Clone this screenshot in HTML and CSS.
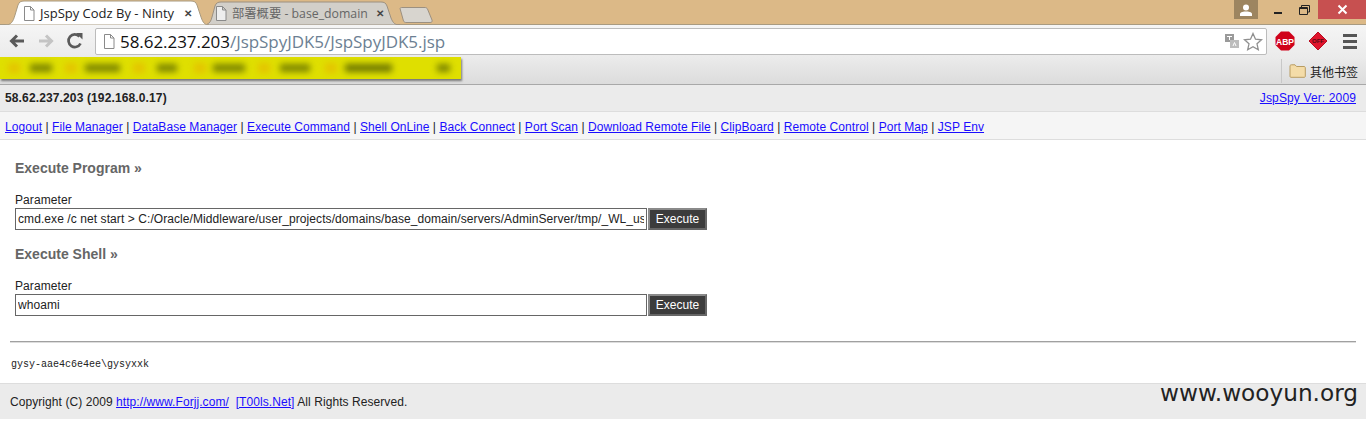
FILE: index.html
```html
<!DOCTYPE html>
<html>
<head>
<meta charset="utf-8">
<title>JspSpy Codz By - Ninty</title>
<link rel="stylesheet" href="styles.css">
</head>
<body>
<div class="titlebar">
  <div class="tabs">
    <div class="tab active">
      <svg class="tab-shape" width="204" height="25" viewBox="0 0 204 25"><path d="M0 25 C6 25 8 22 10 15 L13 5 C14 2 16 1 19 1 H186 C189 1 191 2 192 5 L196 17 C198 23 200 25 204 25 Z" fill="#fff" stroke="#a89a80" stroke-width="1"/></svg>
      <svg class="doc" width="12" height="15" viewBox="0 0 12 15"><path d="M1.5 .5H7.5L11 4V14.500H1.500Z M7.500 .5V4H11" fill="#fff" stroke="#8a8a8a"/></svg>
      <span class="tab-title">JspSpy Codz By - Ninty</span>
      <span class="tab-x">✕</span>
    </div>
    <div class="tab inactive">
      <svg class="tab-shape" width="194" height="24" viewBox="0 0 194 24"><path d="M0 24 C4 22 5 20 6 16 L9 5 C10 2 12 1 15 1 H175 C178 1 180 2 181 5 L185 17 C187 22 189 24 194 24 Z" fill="#d2cfc9" stroke="#9c9080"/></svg>
      <svg class="doc" width="12" height="15" viewBox="0 0 12 15"><path d="M1.5 .5H7.500L11 4V14.500H1.500Z M7.500 .5V4H11" fill="#eee" stroke="#8a8a8a"/></svg>
      <span class="tab-title dim">部署概要 - base_domain</span>
      <span class="tab-x">✕</span>
    </div>
    <svg class="newtab" width="34" height="16" viewBox="0 0 34 16"><path d="M1 1.500 C1 1 2 .5 3 .5 H26 C27 .5 28 1 28.500 2 L33 13 C33.500 14.500 33 15.500 31 15.500 H7 C6 15.500 5 15 4.500 14 Z" fill="#d8d5cf" stroke="#9c9080"/></svg>
  </div>
  <div class="winctl">
    <div class="user"><svg width="14" height="12" viewBox="0 0 14 12"><circle cx="7" cy="3.500" r="3" fill="#fff"/><path d="M1 12V10C1 8 5 7.500 7 7.500S13 8 13 10V12Z" fill="#fff"/></svg></div>
    <div class="ctl"><span class="min"></span></div>
    <div class="ctl"><svg width="11" height="10" viewBox="0 0 11 10"><path d="M2.500 2.500V.5H10.500V7H8.500" fill="none" stroke="#222"/><path d="M.5 2.500H8.500V9.500H.5Z" fill="none" stroke="#222" stroke-width="1"/><path d="M.5 3.500H8.500" stroke="#222"/></svg></div>
    <div class="close"><svg width="11" height="11" viewBox="0 0 11 11"><path d="M1.500 1.500L9.500 9.500M9.500 1.500L1.500 9.500" stroke="#fff" stroke-width="2"/></svg></div>
  </div>
</div>
<div class="toolbar">
  <svg class="tool" width="18" height="16" viewBox="0 0 18 16"><path d="M16 8H4M9 2.500L3.500 8L9 13.500" fill="none" stroke="#5a5a5a" stroke-width="3"/></svg>
  <svg class="tool" width="18" height="16" viewBox="0 0 18 16"><path d="M2 8H14M9 2.500L14.500 8L9 13.500" fill="none" stroke="#c4c4c4" stroke-width="3"/></svg>
  <svg class="tool reload" width="18" height="18" viewBox="0 0 18 18"><path d="M14.500 11.500A6.300 6.300 0 1 1 13.500 4.500" fill="none" stroke="#5a5a5a" stroke-width="2.700"/><path d="M10 1H16.500V7.500Z" fill="#5a5a5a"/></svg>
  <div class="omnibox">
    <svg class="doc" width="12" height="15" viewBox="0 0 12 15"><path d="M1.500 .5H7.500L11 4V14.500H1.500Z M7.500 .5V4H11" fill="#fff" stroke="#8a8a8a"/></svg>
    <span class="url"><b>58.62.237.203</b>/JspSpyJDK5/JspSpyJDK5.jsp</span>
    <svg class="translate" width="14" height="15" viewBox="0 0 14 15"><rect width="9" height="8" fill="#9a9a9a"/><rect x="5" y="6" width="9" height="8" fill="#bdbdbd"/><path d="M2 2.500H7M4.500 2.500V6" stroke="#fff"/><path d="M8 12L9.500 8.500L11 12" stroke="#fff" fill="none"/></svg>
    <svg class="star" width="20" height="19" viewBox="0 0 20 19"><path d="M10 1.500L12.500 7.200L18.500 7.800L14 11.800L15.300 17.700L10 14.700L4.700 17.700L6 11.800L1.500 7.800L7.500 7.200Z" fill="#fff" stroke="#8f8f8f" stroke-width="1.300"/></svg>
  </div>
  <svg class="ext abp" width="20" height="20" viewBox="0 0 20 20"><path d="M6 .5H14L19.500 6V14L14 19.500H6L.5 14V6Z" fill="#d0021b"/><text x="10" y="13.500" text-anchor="middle" class="abp-text">ABP</text></svg>
  <svg class="ext" width="20" height="20" viewBox="0 0 20 20"><path d="M10 1L19 10L10 19L1 10Z" fill="#e0142c" stroke="#b70e22"/><text x="10" y="12" text-anchor="middle" class="off-text">OFF</text></svg>
  <div class="menu"><i></i><i></i><i></i></div>
</div>
<div class="bookmarks">
  <div class="yellow">
    <div class="blur">
      <span class="b1"></span><span class="b2 w1"></span>
      <span class="b1 g1"></span><span class="b2 w2"></span>
      <span class="b1 g2"></span><span class="b2 w3"></span>
      <span class="b1 g3"></span><span class="b2 w4"></span>
      <span class="b1 g4"></span><span class="b2 w5"></span>
      <span class="b1 g5"></span><span class="b2 w6"></span>
      <span class="b2 w7"></span>
    </div>
  </div>
  <div class="other">
    <svg width="17" height="14" viewBox="0 0 17 14"><path d="M1 12.500V2C1 1 2 .8 2.500 .8H6L7.500 2.500H15C16 2.500 16.300 3 16.300 4V12.500C16.300 13 16 13.300 15 13.300H2C1.400 13.300 1 13 1 12.500Z" fill="#f4dca8" stroke="#b89c62"/></svg>
    <span>其他书签</span>
  </div>
</div>
<div class="page">
  <div class="info">
    <b>58.62.237.203 (192.168.0.17)</b>
    <a href="#">JspSpy Ver: 2009</a>
  </div>
  <div class="nav">
    <a href="#">Logout</a> | <a href="#">File Manager</a> | <a href="#">DataBase Manager</a> | <a href="#">Execute Command</a> | <a href="#">Shell OnLine</a> | <a href="#">Back Connect</a> | <a href="#">Port Scan</a> | <a href="#">Download Remote File</a> | <a href="#">ClipBoard</a> | <a href="#">Remote Control</a> | <a href="#">Port Map</a> | <a href="#">JSP Env</a>
  </div>
  <div class="content">
    <h2>Execute Program »</h2>
    <label>Parameter</label>
    <div class="field"><input type="text" value="cmd.exe /c net start &gt; C:/Oracle/Middleware/user_projects/domains/base_domain/servers/AdminServer/tmp/_WL_user/jspspy/result.txt"><button>Execute</button></div>
    <h2 class="second">Execute Shell »</h2>
    <label>Parameter</label>
    <div class="field"><input type="text" value="whoami"><button>Execute</button></div>
  </div>
  <div class="rule"></div>
  <pre class="output">gysy-aae4c6e4ee\gysyxxk</pre>
  <div class="footer">
    <span>Copyright (C) 2009 <a href="#">http://www.Forjj.com/</a>&nbsp; <a href="#">[T00ls.Net]</a> All Rights Reserved.</span>
    <span class="mark">www.wooyun.org</span>
  </div>
</div>
</body>
</html>
```
FILE: styles.css
```css
* { box-sizing: border-box; }
html, body { margin: 0; padding: 0; }
body { width: 1366px; height: 421px; overflow: hidden; background: #fff; font-family: "Liberation Sans", Arial, sans-serif; font-size: 12px; color: #222; }
a { color: #1a0dff; text-decoration: underline; }

.titlebar { height: 25px; background: #dcb987; display: flex; justify-content: space-between; border-bottom: 1px solid #a89a80; }
.tabs { display: flex; align-items: flex-end; height: 25px; padding-left: 5px; }
.tab { position: relative; height: 25px; display: flex; align-items: center; font-family: "Open Sans", "Noto Sans", "Noto Sans CJK SC", sans-serif; font-size: 13px; color: #222; }
.tab-shape { position: absolute; left: 0; top: 0; }
.tab > .doc, .tab > span { position: relative; }
.active { width: 204px; padding: 1px 0 0 18px; z-index: 2; }
.inactive { width: 190px; margin-left: -3px; height: 24px; padding: 0 0 0 9px; color: #666; }
.tab .doc { margin-right: 5px; flex: none; }
.tab-title { width: 142px; white-space: nowrap; }
.tab-title.dim { width: 137px; font-size: 12.3px; }
.tab-x { font-size: 10px; font-weight: 700; color: #444; margin-left: 2px; }
.inactive .tab-x { margin-left: 7px; }
.newtab { margin: 0 0 2px 3px; flex: none; }

.winctl { display: flex; height: 19px; }
.user { width: 24px; background: #9d8560; margin-right: 7px; display: flex; align-items: center; justify-content: center; }
.ctl { width: 26px; display: flex; align-items: center; justify-content: center; }
.min { width: 8px; height: 2px; background: #222; margin-top: 6px; }
.close { width: 48px; margin-left: 1px; background: #c75050; display: flex; align-items: center; justify-content: center; }

.toolbar { height: 32px; background: linear-gradient(#f5f5f5, #ebebeb); display: flex; align-items: center; padding: 0 0 0 8px; }
.tool { flex: none; margin-right: 11px; }
.reload { margin-right: 12px; }
.omnibox { width: 1172px; height: 27px; background: #fff; border: 1px solid #bcbcbc; border-radius: 2px; display: flex; align-items: center; padding: 0 3px 0 7px; margin-left: -1px; }
.omnibox .doc { flex: none; margin-right: 5px; }
.url { font-family: "Open Sans", "Noto Sans", sans-serif; font-size: 17px; color: #6c7f93; flex: 1; white-space: nowrap; letter-spacing: -.05px; }
.url b { font-weight: 400; color: #111; }
.translate { margin-right: 4px; }
.ext { flex: none; margin-left: 13px; }
.abp { margin-left: 8px; }
.abp-text { font: 700 8.5px "Liberation Sans", sans-serif; fill: #fff; }
.off-text { font: 700 6px "Liberation Sans", sans-serif; fill: #5a0a12; }
.menu { display: flex; flex-direction: column; gap: 3px; width: 14px; margin-left: 15px; }
.menu i { display: block; height: 3px; background: #555; }

.bookmarks { height: 28px; background: linear-gradient(#ebebeb, #dcdcdc); display: flex; justify-content: space-between; border-bottom: 1px solid #a8a8a8; }
.yellow { width: 461px; height: 22px; background: #dfdf00; box-shadow: 1px 2px 2px #777; overflow: hidden; }
.blur { display: flex; align-items: center; height: 22px; padding-left: 8px; filter: blur(3px); }
.b1 { width: 12px; height: 10px; background: #e4c400; flex: none; margin-right: 10px; }
.g1 { margin-left: 13px; margin-right: 8px; }
.g2 { margin-left: 13px; margin-right: 12px; }
.g3 { margin-left: 17px; margin-right: 7px; }
.g4 { margin-left: 13px; margin-right: 10px; }
.g5 { margin-left: 15px; margin-right: 8px; }
.b2 { height: 8px; background: #7d8600; flex: none; }
.w1 { width: 22px; }
.w2 { width: 35px; }
.w3 { width: 20px; }
.w4 { width: 32px; }
.w5 { width: 30px; }
.w6 { width: 47px; background: #6f7800; }
.w7 { width: 13px; margin-left: 45px; }
.other { width: 85px; height: 24px; margin-top: 2px; padding-left: 7px; border-left: 1px solid #c8c8c8; display: flex; align-items: center; gap: 4px; font-family: "Noto Sans CJK SC", sans-serif; font-size: 12px; color: #222; }

.page { display: block; }
.info { height: 27px; background: #ebebeb; border-bottom: 1px solid #ddd; display: flex; justify-content: space-between; align-items: center; padding: 0 10px 0 5px; letter-spacing: .13px; }
.nav { height: 28px; background: #f5f5f5; border-bottom: 1px solid #ddd; padding: 7px 5px 0; line-height: 16px; white-space: nowrap; letter-spacing: .06px; }
.content { padding: 20px 0 0 15px; height: 201px; }
h2 { margin: 0; font-size: 14px; line-height: 17px; font-weight: 700; color: #666; }
h2.second { margin-top: 16px; }
label { display: block; margin-top: 16px; line-height: 14px; color: #222; letter-spacing: .09px; }
.field { display: flex; margin-top: 1px; height: 22px; }
input { width: 632px; height: 22px; margin: 0; padding: 0 2px; border: 1px solid #666; background: #fff; font: 12px "Liberation Sans", Arial, sans-serif; letter-spacing: .08px; color: #222; outline: 0; }
button { width: 59px; height: 22px; margin: 0 0 0 1px; padding: 0; border: 2px solid; border-color: #8a8a8a #666 #666 #8a8a8a; background: #3c3c3c; color: #fff; font: 12px "Liberation Sans", Arial, sans-serif; }
.rule { height: 1px; margin: 0 10px; background: #a0a0a0; box-shadow: 0 1px 0 #ddd; }
.output { margin: 0; padding: 16px 0 0 11px; height: 41px; font-family: "Liberation Mono", "DejaVu Sans Mono", monospace; font-size: 10px; line-height: 14px; color: #222; }
.footer { height: 36px; background: #ebebeb; border-top: 1px solid #ddd; padding: 0 10px; position: relative; display: flex; align-items: center; letter-spacing: .07px; }
.mark { position: absolute; right: 8px; top: -5px; font-family: "DejaVu Sans", sans-serif; font-size: 23.2px; line-height: 28px; letter-spacing: 0; color: #222; }
```
